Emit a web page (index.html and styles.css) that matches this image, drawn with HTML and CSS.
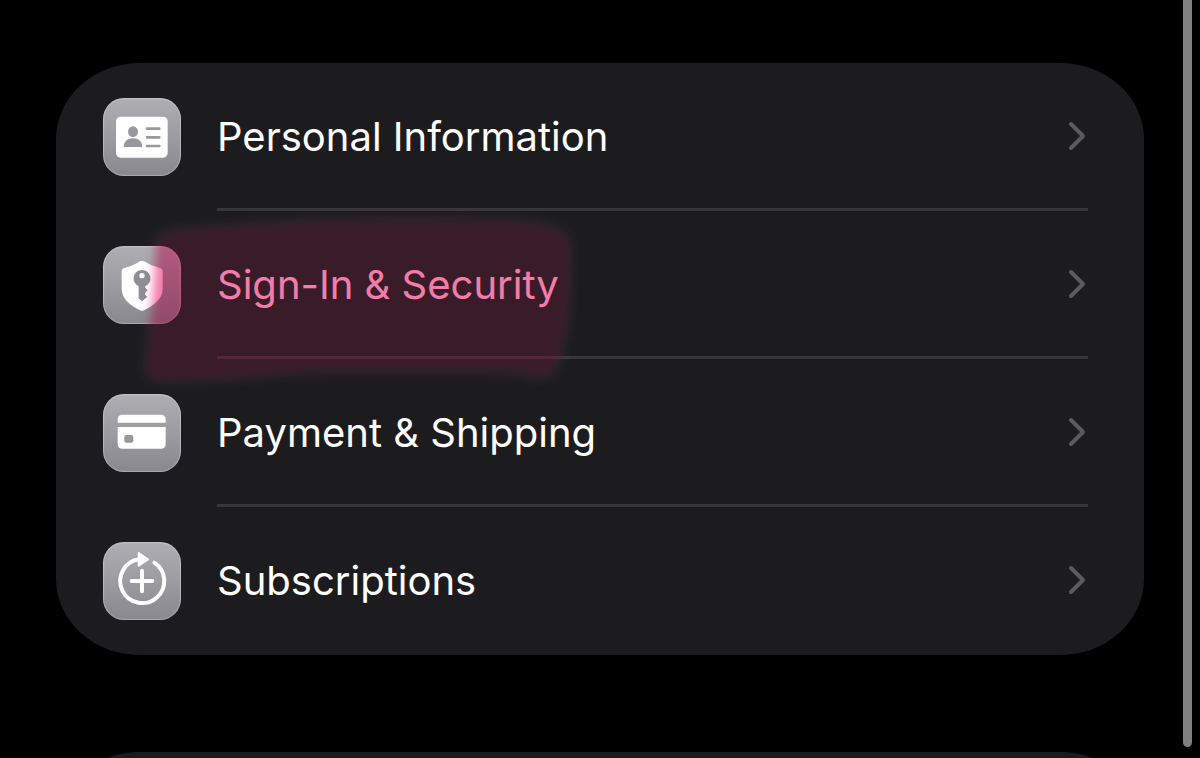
FILE: index.html
```
<!DOCTYPE html>
<html lang="en">
<head>
    <meta charset="UTF-8">
    <meta name="viewport" content="width=device-width, initial-scale=1.0">
    <title>Apple Account</title>
    <link rel="stylesheet" href="styles.css">
</head>
<body>

    <main class="settings">
        <ul class="card">
            <li class="row">
                <a href="#personal" class="row-link">
                    <span class="tile">
                        <svg viewBox="0 0 234 234" aria-hidden="true">
                            <rect x="39" y="56" width="155" height="123" rx="14" fill="#fff"/>
                            <g fill="#98989d">
                                <ellipse cx="90" cy="101" rx="15" ry="16"/>
                                <path d="M62 147 C62 131 74 121 90 121 S118 131 118 147 Z"/>
                            </g>
                            <path d="M132 92 H169 M132 118 H169 M132 144 H169" stroke="#98989d" stroke-width="8" stroke-linecap="round"/>
                        </svg>
                    </span>
                    <span class="row-body">
                        <span class="label">Personal Information</span>
                        <svg class="chevron" viewBox="0 0 18 30" aria-hidden="true"><path d="M3 3 L15 15 L3 27"/></svg>
                    </span>
                </a>
            </li>

            <li class="row">
                <a href="#security" class="row-link">
                    <span class="tile">
                        <svg viewBox="0 0 234 234" aria-hidden="true">
                            <path d="M111 46 Q117 42 123 46 Q144 60 171 66 Q179 68 179 77 V128 C179 160 150 179 123 193 Q117 196 111 193 C84 179 56 160 56 128 V77 Q56 68 64 66 Q91 60 111 46 Z" fill="#fff"/>
                            <path d="M117 72 A25 25 0 0 1 127 120 V126 L134 133 L126 140 V146 L133 152 L117 166 L107 157 V120 A25 25 0 0 1 117 72 Z" fill="#8e8e93"/>
                            <circle cx="117" cy="89" r="8" fill="#fff"/>
                        </svg>
                    </span>
                    <span class="row-body">
                        <span class="label">Sign-In &amp; Security</span>
                        <svg class="chevron" viewBox="0 0 18 30" aria-hidden="true"><path d="M3 3 L15 15 L3 27"/></svg>
                    </span>
                </a>
                <!-- marker stroke, first lifts the dark background and then tints it -->
                <svg class="marker marker-lift" viewBox="0 0 460 200" aria-hidden="true">
                    <defs>
                        <filter id="soft" x="-10%" y="-15%" width="120%" height="130%" color-interpolation-filters="sRGB"><feGaussianBlur stdDeviation="5"/></filter>
                        <path id="stroke" d="M26 36 C40 28 100 26 150 22 C220 18 330 18 390 21 C420 23 438 31 440 42 C441 80 440 130 432 150 C428 172 422 179 406 177 C390 173 375 172 350 172 H190 C150 173 110 180 50 181 C20 182 15 180 16 160 C18 130 23 100 24 80 Z"/>
                    </defs>
                    <use href="#stroke" filter="url(#soft)"/>
                </svg>
                <svg class="marker marker-tint" viewBox="0 0 460 200" aria-hidden="true">
                    <use href="#stroke" filter="url(#soft)"/>
                </svg>
            </li>

            <li class="row">
                <a href="#payment" class="row-link">
                    <span class="tile">
                        <svg viewBox="0 0 234 234" aria-hidden="true">
                            <path d="M44 86 V77 Q44 62 59 62 H173 Q188 62 188 77 V86 Z" fill="#fff"/>
                            <path d="M44 99 H188 V149 Q188 164 173 164 H59 Q44 164 44 149 Z" fill="#fff"/>
                            <rect x="64" y="123" width="27" height="23" rx="6" fill="#98989d"/>
                        </svg>
                    </span>
                    <span class="row-body">
                        <span class="label">Payment &amp; Shipping</span>
                        <svg class="chevron" viewBox="0 0 18 30" aria-hidden="true"><path d="M3 3 L15 15 L3 27"/></svg>
                    </span>
                </a>
            </li>

            <li class="row">
                <a href="#subscriptions" class="row-link">
                    <span class="tile">
                        <svg viewBox="0 0 234 234" aria-hidden="true">
                            <path d="M154 62 A66 66 0 1 1 107 52 M86 117 H148 M117 86 V148" fill="none" stroke="#fff" stroke-width="12" stroke-linecap="round"/>
                            <path d="M107 33 L135 52 L107 71 Z" fill="#fff" stroke="#fff" stroke-width="6" stroke-linejoin="round"/>
                        </svg>
                    </span>
                    <span class="row-body">
                        <span class="label">Subscriptions</span>
                        <svg class="chevron" viewBox="0 0 18 30" aria-hidden="true"><path d="M3 3 L15 15 L3 27"/></svg>
                    </span>
                </a>
            </li>
        </ul>

        <section class="card card-next"></section>
    </main>

    <div class="scroll-thumb"></div>

</body>
</html>
```
FILE: styles.css
```
* {
    margin: 0;
    padding: 0;
    box-sizing: border-box;
}

body, html {
    height: 100%;
    background: #000;
}

body {
    font-family: Inter, "Liberation Sans", sans-serif;
    color: #fff;
}

.settings {
    display: flex;
    flex-direction: column;
    gap: 97px;
    height: 100vh;
    padding: 63px 56px 0;
    overflow: hidden;
}

.card {
    flex: none;
    list-style: none;
    background: #1c1c1e;
    border-radius: 84px / 76px;
}

.card-next {
    min-height: 152px;
}

.row {
    position: relative;
}

.row-link {
    display: flex;
    align-items: center;
    gap: 36px;
    padding: 0 56px 0 47px;
    color: inherit;
    text-decoration: none;
}

.tile {
    flex: none;
    width: 78px;
    height: 78px;
    border-radius: 21px;
    background: linear-gradient(#aeaeb3, #88888e);
    box-shadow: inset 0 0 1px 1px rgba(255, 255, 255, 0.3);
}

.tile svg {
    display: block;
    width: 100%;
    height: 100%;
}

.row-body {
    flex: 1;
    display: flex;
    align-items: center;
    justify-content: space-between;
    height: 148px;
    padding-right: 2px;
    border-bottom: 3px solid #37373a;
}

.row:last-child .row-body {
    border-bottom-color: transparent;
}

.label {
    padding-top: 2px;
    font-size: 40px;
    line-height: 52px;
}

.chevron {
    flex: none;
    width: 18px;
    height: 30px;
    fill: none;
    stroke: #5b5b5f;
    stroke-width: 4;
    stroke-linecap: round;
    stroke-linejoin: round;
}

/* Pink marker over the security row */
.marker {
    position: absolute;
    top: -11px;
    left: 74px;
    z-index: 1;
    width: 460px;
    height: 200px;
    pointer-events: none;
}

.marker-lift {
    fill: #242122;
    mix-blend-mode: screen;
}

.marker-tint {
    fill: #f47caa;
    mix-blend-mode: multiply;
}

.scroll-thumb {
    position: fixed;
    top: -20px;
    right: 8px;
    bottom: 11px;
    width: 9px;
    border-radius: 5px;
    background: #808080;
}
```
